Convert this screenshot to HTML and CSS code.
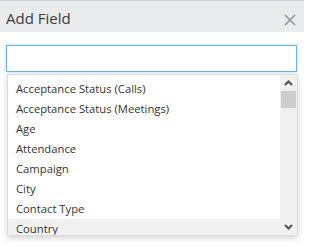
FILE: index.html
```html
<!DOCTYPE html>
<html>
<head>
<meta charset="utf-8">
<link rel="stylesheet" href="styles.css">
</head>
<body>
<div class="dialog">
  <div class="header">
    <span class="title">Add Field</span>
    <svg class="close" width="12" height="12" viewBox="0 0 12 12"><path d="M1 1L11 11M11 1L1 11" stroke="#959595" stroke-width="1.6" fill="none"/></svg>
  </div>
  <div class="body">
    <input class="search" type="text">
    <div class="dropdown">
      <ul class="list">
        <li>Acceptance Status (Calls)</li>
        <li>Acceptance Status (Meetings)</li>
        <li>Age</li>
        <li>Attendance</li>
        <li>Campaign</li>
        <li>City</li>
        <li>Contact Type</li>
        <li class="hover">Country</li>
      </ul>
      <div class="scrollbar">
        <div class="sb-btn"><svg width="9" height="6" viewBox="0 0 9 6"><path d="M1 5L4.5 1.5L8 5" stroke="#505050" stroke-width="2" fill="none"/></svg></div>
        <div class="sb-thumb"></div>
        <div class="sb-track"></div>
        <div class="sb-btn"><svg width="9" height="6" viewBox="0 0 9 6"><path d="M1 1L4.5 4.5L8 1" stroke="#505050" stroke-width="2" fill="none"/></svg></div>
      </div>
    </div>
  </div>
</div>
</body>
</html>
```
FILE: styles.css
```css
html, body {
  margin: 0;
  padding: 0;
  background: #ffffff;
}
body {
  font-family: "Open Sans", "Liberation Sans", sans-serif;
  color: #333333;
}
.dialog {
  width: 304px;
  height: 248px;
  overflow: hidden;
}
.header {
  height: 31px;
  border-top: 1px solid #cfd1d2;
  background: #e9ebec;
  display: flex;
  align-items: center;
  justify-content: space-between;
  padding: 0 8px 0 6px;
}
.title {
  font-size: 15px;
  color: #3c3c3c;
  padding-top: 2px;
}
.close {
  display: block;
  margin-top: 6px;
}
.body {
  padding: 13px 7px 0 6px;
}
.search {
  display: block;
  box-sizing: border-box;
  width: 291px;
  height: 27px;
  margin: 0;
  border: 1px solid #6aaeea;
  border-radius: 0;
  outline: none;
  background: #fff;
  box-shadow: 0 0 3px rgba(102, 175, 233, 0.5);
}
.dropdown {
  margin: 2px 0 0 1px;
  width: 291px;
  height: 161px;
  box-sizing: border-box;
  border: 1px solid #dcdcdc;
  border-bottom: none;
  background: #fff;
  display: flex;
  box-shadow: 0 3px 6px rgba(0, 0, 0, 0.18);
}
.list {
  flex: 1;
  margin: 0;
  padding: 4px 0 0 0;
  list-style: none;
  overflow: hidden;
}
.list li {
  height: 20px;
  line-height: 20px;
  padding-left: 8px;
  font-size: 11.25px;
  white-space: nowrap;
  color: #333;
}
.list li.hover {
  background: #f1f1f1;
}
.scrollbar {
  width: 17px;
  background: #f0f0f0;
  display: flex;
  flex-direction: column;
}
.sb-btn {
  height: 16px;
  display: flex;
  align-items: center;
  justify-content: center;
}
.sb-thumb {
  height: 17px;
  margin: 0 1px 0 1px;
  background: #cdcdcd;
}
.sb-track {
  flex: 1;
}
```
